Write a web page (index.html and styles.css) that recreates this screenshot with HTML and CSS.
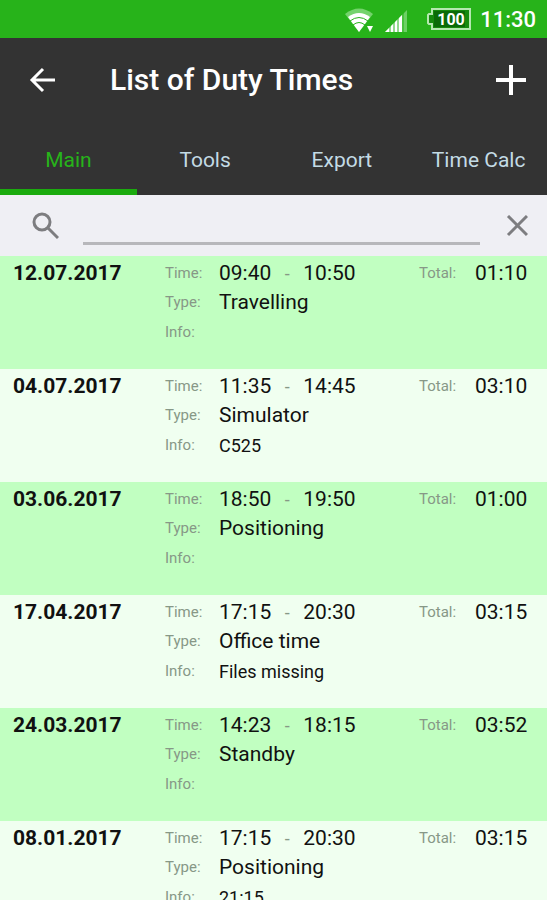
FILE: index.html
```html
<!DOCTYPE html>
<html lang="en">
<head>
    <meta charset="UTF-8">
    <meta name="viewport" content="width=device-width, initial-scale=1.0">
    <title>List of Duty Times</title>
    <link rel="stylesheet" href="styles.css">
</head>
<body>

    <!-- Status bar -->
    <div class="status-bar">
        <svg class="wifi" width="30" height="26" viewBox="0 0 30 26">
            <path d="M0 6 Q14 -5 28 6 L14 24 Z" fill="#74d36c"/>
            <path d="M3 9 Q14 1 25 9 L14 24 Z" fill="#fff"/>
            <path d="M5 13 Q14 6 23 13 M8 17 Q14 12 20 17" fill="none" stroke="#27b31a" stroke-width="1"/>
            <path d="M20 16 h9 v4 l-4 6 h-1 l-4 -6 z" fill="#27b31a"/>
            <path d="M22 18 h6 l-3 6 z" fill="#fff"/>
        </svg>
        <svg class="signal" width="24" height="24" viewBox="0 0 24 24">
            <path d="M0 23 L22 1 V23 Z" fill="#6dd065"/>
            <path d="M0 23 L17 6 V23 Z" fill="#fff"/>
            <path d="M5 16 V24 M9 12 V24 M13 8 V24 M18 3 V24" stroke="#27b31a" stroke-width="1"/>
        </svg>
        <svg class="battery" width="44" height="22" viewBox="0 0 44 22">
            <path d="M5 1 H43 V21 H5 V16 H2 L1 15 V7 L2 6 H5 Z" fill="#168a0e" stroke="#b5e8b0" stroke-width="2"/>
            <path d="M7 3 H38 V19 H7 Z" fill="#0b6b08"/>
            <text x="24" y="17" text-anchor="middle">100</text>
        </svg>
        <span class="clock">11:30</span>
    </div>

    <!-- Title bar and tabs -->
    <header class="header">
        <div class="title-bar">
            <button class="icon-button" type="button" aria-label="Back">
                <svg width="26" height="26" viewBox="0 0 26 26" fill="none" stroke="#fff" stroke-width="3">
                    <path d="M26 13 H3 M14 2 L3 13 L14 24"/>
                </svg>
            </button>
            <h1>List of Duty Times</h1>
            <button class="icon-button" type="button" aria-label="Add">
                <svg width="30" height="30" viewBox="0 0 30 30" fill="none" stroke="#fff" stroke-width="4">
                    <path d="M15 0 V30 M0 15 H30"/>
                </svg>
            </button>
        </div>
        <nav class="tabs">
            <a href="#main" class="active">Main</a>
            <a href="#tools">Tools</a>
            <a href="#export">Export</a>
            <a href="#calc">Time Calc</a>
        </nav>
    </header>

    <!-- Search -->
    <form class="search">
        <label for="search-input" aria-label="Search">
            <svg width="28" height="28" viewBox="0 0 28 28" fill="none" stroke="#7d7d80" stroke-width="3">
                <circle cx="11" cy="10" r="8"/>
                <path d="M17 16 L27 26"/>
            </svg>
        </label>
        <input type="text" id="search-input" name="search">
        <button class="icon-button" type="reset" aria-label="Clear">
            <svg width="22" height="22" viewBox="0 0 22 22" fill="none" stroke="#7d7d80" stroke-width="3">
                <path d="M2 1 L21 20 M21 1 L2 20"/>
            </svg>
        </button>
    </form>

    <!-- Duty times -->
    <ul class="duty-list">
        <li class="duty">
            <span class="date">12.07.2017</span>
            <span class="label">Time:</span>
            <span class="value">09:40<i>-</i>10:50</span>
            <span class="label">Total:</span>
            <span class="value">01:10</span>
            <span class="label second">Type:</span>
            <span class="value wide">Travelling</span>
            <span class="label second">Info:</span>
            <span class="info wide"></span>
        </li>
        <li class="duty">
            <span class="date">04.07.2017</span>
            <span class="label">Time:</span>
            <span class="value">11:35<i>-</i>14:45</span>
            <span class="label">Total:</span>
            <span class="value">03:10</span>
            <span class="label second">Type:</span>
            <span class="value wide">Simulator</span>
            <span class="label second">Info:</span>
            <span class="info wide">C525</span>
        </li>
        <li class="duty">
            <span class="date">03.06.2017</span>
            <span class="label">Time:</span>
            <span class="value">18:50<i>-</i>19:50</span>
            <span class="label">Total:</span>
            <span class="value">01:00</span>
            <span class="label second">Type:</span>
            <span class="value wide">Positioning</span>
            <span class="label second">Info:</span>
            <span class="info wide"></span>
        </li>
        <li class="duty">
            <span class="date">17.04.2017</span>
            <span class="label">Time:</span>
            <span class="value">17:15<i>-</i>20:30</span>
            <span class="label">Total:</span>
            <span class="value">03:15</span>
            <span class="label second">Type:</span>
            <span class="value wide">Office time</span>
            <span class="label second">Info:</span>
            <span class="info wide">Files missing</span>
        </li>
        <li class="duty">
            <span class="date">24.03.2017</span>
            <span class="label">Time:</span>
            <span class="value">14:23<i>-</i>18:15</span>
            <span class="label">Total:</span>
            <span class="value">03:52</span>
            <span class="label second">Type:</span>
            <span class="value wide">Standby</span>
            <span class="label second">Info:</span>
            <span class="info wide"></span>
        </li>
        <li class="duty">
            <span class="date">08.01.2017</span>
            <span class="label">Time:</span>
            <span class="value">17:15<i>-</i>20:30</span>
            <span class="label">Total:</span>
            <span class="value">03:15</span>
            <span class="label second">Type:</span>
            <span class="value wide">Positioning</span>
            <span class="label second">Info:</span>
            <span class="info wide">21:15</span>
        </li>
    </ul>

</body>
</html>
```
FILE: styles.css
```css
* {
    box-sizing: border-box;
    margin: 0;
    padding: 0;
}

body {
    height: 100vh;
    display: flex;
    flex-direction: column;
    font-family: Roboto, "Liberation Sans", sans-serif;
    font-size: 21px;
    background-color: #efeff4;
    color: #111;
}

/* Status bar */
.status-bar {
    display: flex;
    align-items: center;
    justify-content: flex-end;
    height: 38px;
    flex-shrink: 0;
    padding-right: 11px;
    background-color: #27b31a;
    color: #fff;
}

.wifi {
    margin: 4px 10px 0 0;
}

.signal {
    margin: 4px 18px 0 0;
}

.battery {
    margin-right: 9px;
}

.battery text {
    font-size: 16px;
    font-weight: bold;
    fill: #fff;
}

.clock {
    font-size: 22px;
    font-weight: 500;
}

/* Header */
.header {
    flex-shrink: 0;
    background-color: #333;
}

.title-bar {
    display: flex;
    align-items: center;
    height: 86px;
    padding: 0 21px 3px 29px;
}

.title-bar h1 {
    flex: 1;
    margin-left: 55px;
    font-size: 30px;
    font-weight: 500;
    color: #fff;
}

.icon-button {
    display: flex;
    border: none;
    background: none;
    cursor: pointer;
}

.tabs {
    display: grid;
    grid-template-columns: repeat(4, 1fr);
}

.tabs a {
    height: 71px;
    border-bottom: 6px solid transparent;
    line-height: 72px;
    text-align: center;
    text-decoration: none;
    white-space: nowrap;
    color: #c3dbe5;
}

.tabs a.active {
    border-bottom-color: #1bab0e;
    color: #27b31a;
}

/* Search */
.search {
    display: flex;
    align-items: center;
    height: 61px;
    flex-shrink: 0;
    padding: 0 19px 0 31px;
}

.search label {
    display: flex;
}

.search input {
    flex: 1;
    min-width: 0;
    height: 38px;
    margin: 0 26px 0 24px;
    border: none;
    border-bottom: 3px solid #b7b7bb;
    background: none;
    font: inherit;
    outline: none;
}

/* Duty list */
.duty-list {
    flex: 1;
    min-height: 0;
    overflow-y: auto;
    scrollbar-width: none;
    list-style: none;
}

.duty {
    display: grid;
    grid-template-columns: 152px 54px 1fr 56px 54px;
    grid-template-rows: 29px 29px 31px;
    align-items: center;
    height: 113px;
    padding: 3px 18px 0 13px;
    background-color: #f0fff0;
    line-height: 29px;
}

.duty:nth-child(odd) {
    background-color: #c1ffc1;
}

.date {
    font-weight: bold;
}

.label {
    font-size: 15px;
    color: #879887;
}

.second {
    grid-column: 2;
}

.wide {
    grid-column: 3 / -1;
}

.value i {
    display: inline-block;
    width: 32px;
    text-align: center;
    font-style: normal;
    font-size: 18px;
    color: #879887;
}

.info {
    font-size: 18px;
}
```
